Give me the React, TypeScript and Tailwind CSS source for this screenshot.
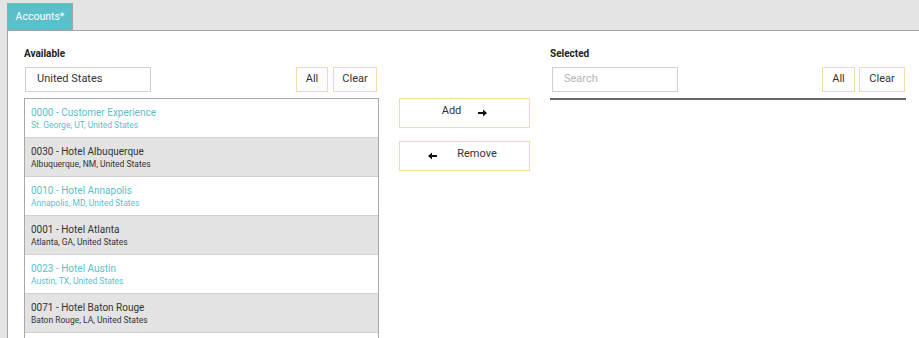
import React from 'react';

interface Account {
  code: string;
  name: string;
  place: string;
  active: boolean;
}

const accounts: Account[] = [
  { code: '0000', name: 'Customer Experience', place: 'St. George, UT, United States', active: true },
  { code: '0030', name: 'Hotel Albuquerque', place: 'Albuquerque, NM, United States', active: false },
  { code: '0010', name: 'Hotel Annapolis', place: 'Annapolis, MD, United States', active: true },
  { code: '0001', name: 'Hotel Atlanta', place: 'Atlanta, GA, United States', active: false },
  { code: '0023', name: 'Hotel Austin', place: 'Austin, TX, United States', active: true },
  { code: '0071', name: 'Hotel Baton Rouge', place: 'Baton Rouge, LA, United States', active: false },
];

const Arrow = ({ left }: { left?: boolean }) => (
  <svg width="9" height="8" viewBox="0 0 9 8" className={left ? 'rotate-180' : ''}>
    <path d="M0 3h5V0.5L9 4 5 7.5V5H0z" fill="#111" />
  </svg>
);

const SmallButton = ({ label, w }: { label: string; w: string }) => (
  <button className={`${w} h-[25px] border border-[#fbd9a3] bg-white text-[11px] text-[#333]`}>
    {label}
  </button>
);

export default function App() {
  return (
    <div className="w-[919px] h-[338px] overflow-hidden bg-[#e4e4e4] pt-[3px] pl-[7px] font-['Roboto',sans-serif] flex flex-col">
      {/* onglet */}
      <div className="shrink-0 w-[66px] h-[27px] bg-[#5bbfca] border border-b-0 border-[#a4a4a4] text-white text-[10.5px] flex items-center justify-center">
        Accounts*
      </div>

      <div className="flex-1 min-h-0 bg-white border-t border-l border-[#a4a4a4] pl-4 pt-[17px] flex">
        {/* Available */}
        <div className="w-[355px] flex flex-col">
          <div className="text-[10px] font-bold text-[#222] h-[12px] leading-[12px]">Available</div>
          <div className="mt-[7px] flex items-center justify-between pr-[2px]">
            <div className="ml-[1px] w-[126px] h-[25px] border border-[#cfcfcf] text-[11px] text-[#333] flex items-center pl-[11px]">
              United States
            </div>
            <div className="flex gap-[5px]">
              <SmallButton label="All" w="w-[32px]" />
              <SmallButton label="Clear" w="w-[44px]" />
            </div>
          </div>
          <div className="mt-[6px] border border-[#a8a8a8] border-b-0">
            {accounts.map(a => (
              <div
                key={a.code}
                className={`h-[39px] border-b border-[#d0d0d0] pl-[6px] pt-[7px] ${
                  a.active ? 'bg-white text-[#5bbfca]' : 'bg-[#e3e3e3] text-[#333]'
                }`}
              >
                <div className="text-[10px] leading-[13px]">
                  {a.code} - {a.name}
                </div>
                <div className="text-[8.5px] leading-[13px]">{a.place}</div>
              </div>
            ))}
            <div className="h-[10px] bg-white" />
          </div>
        </div>

        {/* boutons centraux */}
        <div className="ml-[20px] w-[131px] pt-[50px] flex flex-col gap-[13px]">
          <button className="h-[30px] border border-[#fbd9a3] bg-white flex items-center justify-center gap-[17px] text-[11px] text-[#333]">
            <span className="-mt-[4px]">Add</span>
            <Arrow />
          </button>
          <button className="h-[30px] border border-[#fbd9a3] bg-white flex items-center justify-center gap-[20px] text-[11px] text-[#333] pr-[4px]">
            <Arrow left />
            <span className="-mt-[4px]">Remove</span>
          </button>
        </div>

        {/* Selected */}
        <div className="ml-[20px] w-[356px] flex flex-col">
          <div className="text-[10px] font-bold text-[#222] h-[12px] leading-[12px]">Selected</div>
          <div className="mt-[7px] flex items-center justify-between pr-[1px]">
            <div className="ml-[2px] w-[126px] h-[25px] border border-[#cfcfcf] text-[11px] text-[#b5b5b5] flex items-center pl-[11px]">
              Search
            </div>
            <div className="flex gap-[4px]">
              <SmallButton label="All" w="w-[33px]" />
              <SmallButton label="Clear" w="w-[46px]" />
            </div>
          </div>
          <div className="mt-[6px] h-[2px] bg-[#666]" />
        </div>
      </div>
    </div>
  );
}
